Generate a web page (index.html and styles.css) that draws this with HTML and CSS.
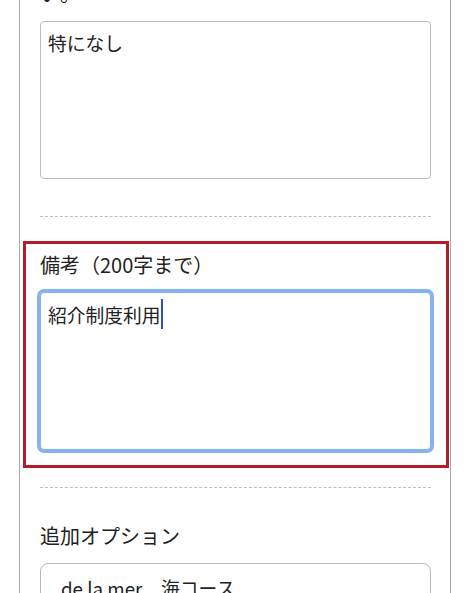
FILE: index.html
```html
<!DOCTYPE html>
<html lang="ja">
<head>
<meta charset="utf-8">
<title>フォーム</title>
<link rel="stylesheet" href="styles.css">
</head>
<body>
<main class="card">
  <section class="field">
    <p class="label">その他、ご要望などがあればご記入ください。</p>
    <textarea class="textarea" readonly>特になし</textarea>
  </section>
  <section class="field highlighted">
    <p class="label">備考（200字まで）</p>
    <div class="textarea focused">紹介制度利用<span class="caret"></span></div>
    <div class="highlight-frame"></div>
  </section>
  <section class="field">
    <p class="label">追加オプション</p>
    <div class="option">de la mer　海コース</div>
  </section>
</main>
</body>
</html>
```

FILE: styles.css
```css
html, body {
  margin: 0;
  padding: 0;
  background: #fff;
}
body {
  font-family: "Noto Sans CJK JP", "Noto Sans", sans-serif;
  color: #222;
  overflow: hidden;
}
.card {
  box-sizing: border-box;
  width: 432px;
  margin: -50px 0 0 19px;
  padding: 0 19px 0 20px;
  border-left: 1px solid #a8a8a8;
  border-right: 1px solid #a8a8a8;
}
.field {
  position: relative;
  padding: 33px 0 37px;
  border-bottom: 1px dashed #bdbdbd;
}
.field:first-child {
  padding-top: 0;
}
.label {
  margin: 0 0 13px;
  font-size: 20px;
  line-height: 29px;
}
.textarea {
  display: block;
  box-sizing: border-box;
  width: 100%;
  height: 158px;
  margin: 0;
  padding: 7px;
  border: 1px solid #bcbcbc;
  border-radius: 4px;
  font-family: "Noto Sans CJK JP", "Noto Sans", sans-serif;
  font-size: 18.75px;
  line-height: 27px;
  color: #222;
  background: #fff;
  resize: none;
  outline: none;
}
.focused {
  padding-top: 8px;
  border-color: #85b3ee;
  box-shadow: 0 0 0 3px #85b3ee;
}
.caret {
  display: inline-block;
  width: 2px;
  height: 30px;
  margin-top: -3px;
  vertical-align: -6px;
  background: #2b4fcf;
}
.highlight-frame {
  position: absolute;
  left: -17px;
  right: -18px;
  top: 24px;
  bottom: 19px;
  border: 3px solid #ae1f2b;
  pointer-events: none;
}
.option {
  box-sizing: border-box;
  padding: 10px 20px;
  border: 1px solid #b8b8b8;
  border-radius: 8px;
  font-size: 18.75px;
  line-height: 27px;
  height: 80px;
}
```
